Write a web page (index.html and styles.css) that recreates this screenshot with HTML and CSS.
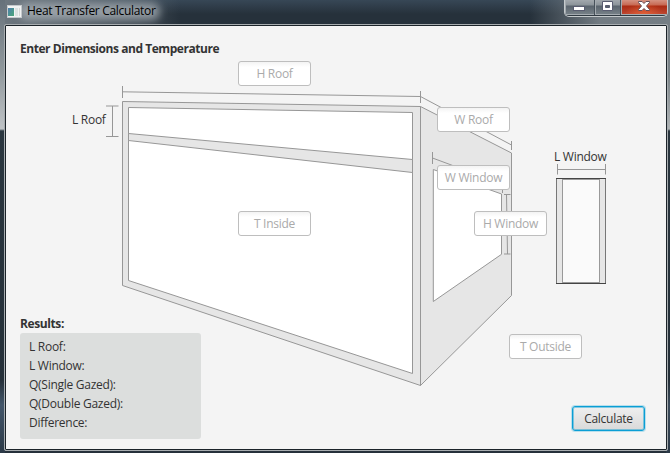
FILE: index.html
```html
<!DOCTYPE html>
<html lang="en">
<head>
<meta charset="utf-8">
<title>Heat Transfer Calculator</title>
<link rel="stylesheet" href="styles.css">
</head>
<body>
<div class="window">
  <header class="titlebar">
    <svg class="app-icon" width="15" height="13" viewBox="0 0 15 13">
      <defs><linearGradient id="ig" x1="0" y1="0" x2="1" y2="1"><stop offset="0" stop-color="#4e7fb0"/><stop offset="1" stop-color="#4aa777"/></linearGradient></defs>
      <rect x=".5" y=".5" width="14" height="12" fill="#f1f3f3" stroke="#c5c9cc"/>
      <rect x="1" y="3" width="6" height="8" fill="url(#ig)"/>
      <rect x="8" y="3" width="3" height="8" fill="#dce3e2"/><rect x="12" y="3" width="1" height="8" fill="#d5d7d7"/>
    </svg>
    <span class="title">Heat Transfer Calculator</span>
    <div class="controls">
      <span class="control minimize"><svg width="12" height="5" viewBox="0 0 12 5"><rect x=".5" y=".5" width="11" height="4" fill="#fff" stroke="#595c70"/></svg></span>
      <span class="control maximize"><svg width="13" height="10" viewBox="0 0 13 10"><path fill="#fff" stroke="#595c70" fill-rule="evenodd" d="M1.500.5h10v9h-10zM4.500 4.500h4v2h-4z"/></svg></span>
      <span class="control close"><svg width="12" height="10" viewBox="0 0 12 10"><path fill="#fff" stroke="#66505a" d="M.5.5h3.500L6 2.500 8 .5h3.500v1L8.500 5l3 3.500v1H8L6 7.500 4 9.500H.5v-1l3-3.500-3-3.500z"/></svg></span>
    </div>
  </header>
  <main class="client">
    <h1 class="heading">Enter Dimensions and Temperature</h1>
    <svg class="drawing" width="660" height="423" viewBox="6 26 660 423">
      <g class="frame">
        <path d="M122.500 101.500 420.500 106.500V385.500L122.500 285.500z"/>
        <path d="M420.500 106.500 511.500 153V295.500L420.500 385.500z"/>
        <path class="glass" d="M128.500 107.500 412.500 112.500V373.500L128.500 280.500z"/>
        <path d="M128.500 133.500 412.500 159.500V172.500L128.500 140.500z"/>
        <path class="glass" d="M433.300 169.500 501.500 194V254.300L433.300 301.500z"/>
      </g>
      <path class="dimension" d="M122.500 86V98M122.500 91.800 420.500 96.500M420.500 91V103M420.500 96.500 511.500 145M511.500 141V150M106 106H118.500M106 136.500H118.500M112.500 106V136.500M432.500 152V164M432.500 158 502.500 184M502.500 184V193M504 194.500H510.500M504 254H510.500M506.500 194.500 507.500 254M557.500 164V174.500M605.500 164V174.500M557.500 169.500H605.500"/>
      <rect class="pane" x="556.500" y="178.500" width="49" height="105"/>
      <rect class="pane-glass" x="562.500" y="179.500" width="37" height="103"/>
      <path class="pane-edge" d="M556 178.500H606M556 283.500H606"/>
    </svg>
    <span class="label l-roof">L Roof</span>
    <span class="label l-window">L Window</span>
    <div class="field h-roof">H Roof</div>
    <div class="field w-roof">W Roof</div>
    <div class="field w-window">W Window</div>
    <div class="field h-window">H Window</div>
    <div class="field t-inside">T Inside</div>
    <div class="field t-outside">T Outside</div>
    <footer class="bottom">
      <section>
        <h2 class="results-title">Results:</h2>
        <div class="results">
          <div><span>L Roof:</span></div>
          <div><span>L Window:</span></div>
          <div><span>Q(Single Gazed):</span></div>
          <div><span>Q(Double Gazed):</span></div>
          <div><span>Difference:</span></div>
        </div>
      </section>
      <button class="calculate">Calculate</button>
    </footer>
  </main>
</div>
</body>
</html>
```
FILE: styles.css
```css
* { box-sizing: border-box; }
body { margin: 0; overflow: hidden; font: 12px/19px "Open Sans", "Noto Sans", sans-serif; letter-spacing: -0.27px; color: #333; }
.window {
  width: 670px; height: 453px; padding: 0 2px 2px 4px;
  background:
    linear-gradient(#66717a, #939b9f 75px, #bfc3c6 129px, #6d777d 130px, #2a363f 131px, #253039 380px, #43566a 405px, #2b3947) 0 0 / 5px 100% no-repeat,
    linear-gradient(#747d84, #7a8388 75px, #aeb3b5 129px, #2a363f 131px, #253039 380px, #3b4b5b 405px, #2b3947) 100% 0 / 4px 100% no-repeat,
    linear-gradient(90deg, #6e7880 0, rgba(110,120,128,.35) 140px, transparent 180px, transparent 530px, #737c83 600px, #747d84) 0 0 / 100% 24px no-repeat,
    linear-gradient(#374756 0, #26313b 14px, #26313b);
}
.titlebar { height: 24px; display: flex; align-items: flex-start; padding-left: 2px; }
.app-icon { position: relative; z-index: 1; margin: 5px 0 0 1px; }
.title { position: relative; z-index: 0; color: #000; line-height: 20px; margin: 1px 0 0 5px; letter-spacing: -0.32px; white-space: nowrap; }
.title::before { content: ""; position: absolute; z-index: -1; inset: 2px -4px 1px -8px; border-radius: 8px; background: rgba(168,175,181,.8); filter: blur(4px); }
.controls { display: flex; margin: 0 0 0 auto; width: 104px; height: 17px; border: 1px solid #c5cacc; border-top: 0; border-radius: 0 0 5px 5px; box-shadow: inset 0 -1px #303a42; overflow: hidden; }
.control { display: flex; align-items: flex-start; justify-content: center; height: 15px; border-left: 1px solid #47515a; background: linear-gradient(#a2a8ad 0, #8c949a 5px, #5a646d 6px, #79838a); box-shadow: inset 1px -1px #a4abb0; }
.minimize { width: 29px; padding-top: 6px; border: 0; }
.maximize { width: 27px; padding-top: 1px; }
.close { width: 47px; padding-top: 1px; background: radial-gradient(ellipse at 50% 100%, rgba(246,113,62,.65), transparent 60%), linear-gradient(#d59281 0, #c76953 5px, #aa2b13 6px, #bf4934); }
.client { position: relative; width: 664px; height: 427px; padding: 14px 22px 11px 14px; display: flex; flex-direction: column; justify-content: space-between; background: #f4f4f4; border: 1px solid #a8adb0; border-radius: 2px; box-shadow: inset 0 0 0 1px #1b2329; }
.heading, .results-title { margin: 0; font-size: 12px; font-weight: 700; }
.heading { position: relative; line-height: 20px; padding-left: 1px; letter-spacing: -0.45px; }
.drawing { position: absolute; left: 1px; top: 1px; }
.frame { fill: #e6e6e6; stroke: #979797; }
.frame .glass { fill: #fff; }
.dimension { fill: none; stroke: #979797; }
.pane { fill: #e6e6e6; stroke: #777; }
.pane-glass { fill: #fafafa; stroke: #999; }
.pane-edge { stroke: #444; }
.label, .field { position: absolute; white-space: nowrap; }
.l-roof { left: 67px; top: 85px; }
.l-window { left: 549px; top: 122px; }
.field { width: 73px; height: 25px; border: 1px solid #bebebe; border-radius: 3px; background: linear-gradient(#f3f3f3, #fff 5px); color: #aaa; text-align: center; line-height: 24px; }
.h-roof { left: 233px; top: 36px; }
.w-roof { left: 432px; top: 82px; }
.w-window { left: 432px; top: 140px; }
.h-window { left: 469px; top: 186px; }
.t-inside { left: 233px; top: 186px; }
.t-outside { left: 504px; top: 309px; }
.bottom { position: relative; display: flex; justify-content: space-between; align-items: flex-end; }
.results-title { line-height: 18px; padding-left: 1px; letter-spacing: -0.4px; }
.results { width: 181px; height: 106px; margin-left: 1px; padding: 4px 9px; border-radius: 3px; background: #dcdedd; }
.calculate { width: 73px; height: 25px; margin: 0 0 8px; padding: 0; font: inherit; letter-spacing: inherit; color: #333; border: 1px solid #0a9ed5; border-radius: 3px; background: linear-gradient(#efefef, #d9d9d9); box-shadow: 0 0 0 1px rgba(3,158,211,.25), inset 0 0 0 1px rgba(3,158,211,.45); }
```
